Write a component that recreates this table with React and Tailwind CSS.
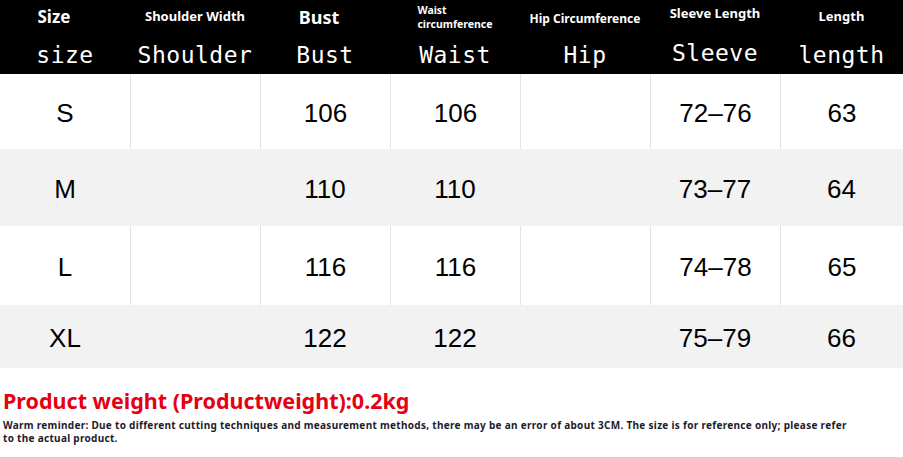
const cols = ["w-[130px]", "w-[130px]", "w-[130px]", "w-[130px]", "w-[130px]", "w-[130px]", "w-[123px]"];

const heads = [
  { top: "Size", topClass: "text-[17px] pr-[22px]", bottom: "size" },
  { top: "Shoulder Width", topClass: "text-[13px]", bottom: "Shoulder" },
  { top: "Bust", topClass: "text-[18px] pr-[12px]", bottom: "Bust" },
  { top: "Waist\ncircumference", topClass: "text-[10.5px] leading-[14px] text-left whitespace-pre-line", bottom: "Waist" },
  { top: "Hip Circumference", topClass: "text-[12px] pt-[4px]", bottom: "Hip" },
  { top: "Sleeve Length", topClass: "text-[13px] pb-[6px]", bottom: "Sleeve" },
  { top: "Length", topClass: "text-[13px]", bottom: "length" },
];

const rows = [
  { h: "h-[75px]", bg: "bg-white", lines: true, cells: ["S", "", "106", "106", "", "72–76", "63"] },
  { h: "h-[77px]", bg: "bg-[#f2f2f2]", lines: false, cells: ["M", "", "110", "110", "", "73–77", "64"] },
  { h: "h-[79px]", bg: "bg-white", lines: true, cells: ["L", "", "116", "116", "", "74–78", "65"] },
  { h: "h-[63px]", bg: "bg-[#f2f2f2]", lines: false, cells: ["XL", "", "122", "122", "", "75–79", "66"] },
];

export default function App() {
  return (
    <div className="w-[903px] h-[457px] bg-white overflow-hidden">
      <div className="h-[74px] bg-black flex text-white">
        {heads.map((c, i) => (
          <div key={i} className={`${cols[i]} flex flex-col`}>
            <div className="h-[34px] flex items-center justify-center">
              <span className={`font-bold font-['Noto_Sans',sans-serif] ${c.topClass}`}>{c.top}</span>
            </div>
            <div className={`flex-1 flex items-center justify-center ${i === 5 ? "pb-[2px]" : "pt-[2px]"}`}>
              <span className="text-[23px] tracking-[0.5px] font-['DejaVu_Sans_Mono',monospace]">{c.bottom}</span>
            </div>
          </div>
        ))}
      </div>
      {rows.map((r, ri) => (
        <div key={ri} className={`${r.h} ${r.bg} flex`}>
          {r.cells.map((t, i) => (
            <div
              key={i}
              className={`${cols[i]} flex items-center justify-center pt-[4px] ${
                r.lines && i > 0 ? "border-l border-[#e3e3e3]" : ""
              } text-[26px] text-black font-['Liberation_Sans',sans-serif]`}
            >
              {t}
            </div>
          ))}
        </div>
      ))}
      <div className="px-[3px] pt-[20px]">
        <div className="text-[21.5px] leading-[26px] font-bold text-[#e50012] font-['Noto_Sans',sans-serif]">
          Product weight (Productweight):0.2kg
        </div>
        <div className="mt-[5px] text-[10px] leading-[13px] tracking-[0.3px] font-bold text-[#1c1c2c] font-['Noto_Sans',sans-serif]">
          Warm reminder: Due to different cutting techniques and measurement methods, there may be an error of about 3CM. The size is for reference only; please refer
          <br />
          to the actual product.
        </div>
      </div>
    </div>
  );
}
